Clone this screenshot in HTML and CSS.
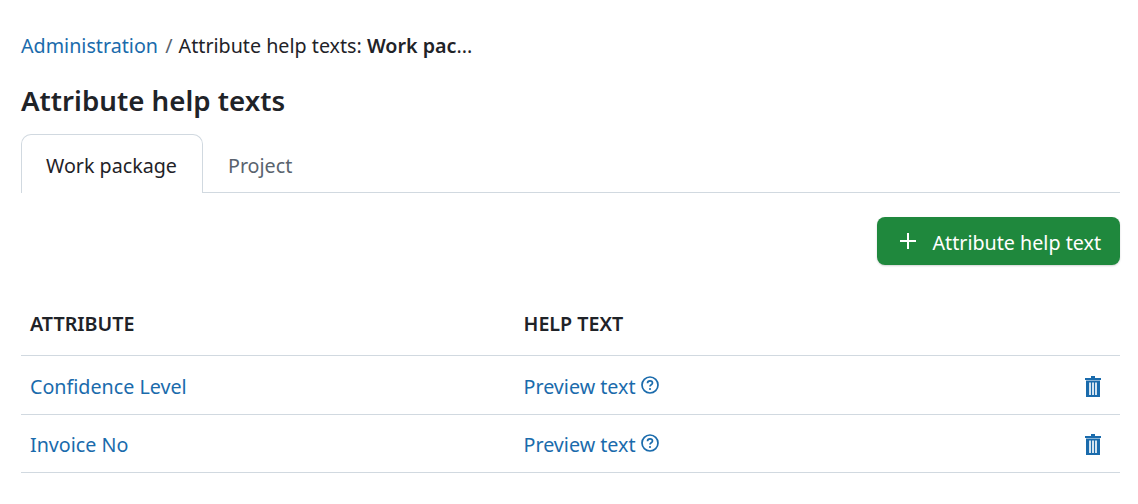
FILE: index.html
```html
<!DOCTYPE html>
<html>
<head>
    <meta charset="UTF-8" />
    <title>Attribute help texts</title>
    <link rel="stylesheet" href="styles.css">
</head>
<body>
    <div class="breadcrumb">
        <a href="#">Administration</a>
        <span class="separator">/</span>
        <span>Attribute help texts: <b>Work pac</b>...</span>
    </div>

    <h1 class="title">Attribute help texts</h1>

    <div class="tabs">
        <a class="tab active" href="#">Work package</a>
        <a class="tab" href="#">Project</a>
    </div>

    <div class="toolbar">
        <a class="button" href="#">
            <svg class="plus" width="18" height="18" viewBox="0 0 18 18"><path d="M9 1v16M1 9h16" stroke="#fff" stroke-width="2" fill="none"/></svg>
            <span class="label">Attribute help text</span>
        </a>
    </div>

    <table class="list">
        <thead>
            <tr>
                <th class="col-attr">ATTRIBUTE</th>
                <th>HELP TEXT</th>
                <th class="col-actions"></th>
            </tr>
        </thead>
        <tbody>
            <tr>
                <td><a href="#">Confidence Level</a></td>
                <td>
                    <a class="preview" href="#">Preview text
                        <svg width="18" height="18" viewBox="0 0 18 18"><circle cx="9" cy="9" r="8" stroke="#1a6bac" stroke-width="1.7" fill="none"/><path d="M6.500 7.200c0-1.500 1.100-2.400 2.500-2.400s2.500.9 2.500 2.100c0 1.800-2.500 1.800-2.500 3.500" stroke="#1a6bac" stroke-width="1.700" fill="none"/><circle cx="9" cy="13" r="1.100" fill="#1a6bac"/></svg>
                    </a>
                </td>
                <td class="col-actions">
                    <svg class="trash" width="16" height="21" viewBox="0 0 16 21"><path d="M6 0h4v2H6zM0 2h16v2H0zM1 4.500h14V21H1z" fill="#1a6bac"/><path d="M4 6.500h2V19H4zM7 6.500h2V19H7zM10 6.500h2V19h-2z" fill="#d3e3f0"/></svg>
                </td>
            </tr>
            <tr>
                <td><a href="#">Invoice No</a></td>
                <td>
                    <a class="preview" href="#">Preview text
                        <svg width="18" height="18" viewBox="0 0 18 18"><circle cx="9" cy="9" r="8" stroke="#1a6bac" stroke-width="1.7" fill="none"/><path d="M6.500 7.200c0-1.500 1.100-2.400 2.500-2.400s2.500.9 2.500 2.100c0 1.800-2.500 1.800-2.500 3.500" stroke="#1a6bac" stroke-width="1.700" fill="none"/><circle cx="9" cy="13" r="1.100" fill="#1a6bac"/></svg>
                    </a>
                </td>
                <td class="col-actions">
                    <svg class="trash" width="16" height="21" viewBox="0 0 16 21"><path d="M6 0h4v2H6zM0 2h16v2H0zM1 4.500h14V21H1z" fill="#1a6bac"/><path d="M4 6.500h2V19H4zM7 6.500h2V19H7zM10 6.500h2V19h-2z" fill="#d3e3f0"/></svg>
                </td>
            </tr>
        </tbody>
    </table>
</body>
</html>
```

FILE: styles.css
```css
html, body {
    overflow: hidden;
}

body {
    margin: 0;
    padding: 32px 18px 0 21px;
    background-color: white;
    color: #1f2328;
    font-family: "Noto Sans", Arial, sans-serif;
    font-size: 19.7px;
}

a {
    color: #1a6bac;
    text-decoration: none;
}

.breadcrumb {
    height: 28px;
    line-height: 28px;
}

.separator {
    color: #59636e;
    margin: 0 1px 0 2px;
}

.breadcrumb b {
    font-weight: 600;
}

.title {
    margin: 21px 0 0 0;
    height: 53px;
    line-height: 38px;
    font-size: 27.7px;
    font-weight: 600;
}

.tabs {
    display: flex;
    height: 59px;
    box-sizing: border-box;
    border-bottom: 1px solid #d1d9e0;
}

.tab {
    padding: 0 25px;
    line-height: 63px;
    color: #59636e;
}

.tab.active {
    height: 59px;
    box-sizing: border-box;
    padding: 0 25px 0 24px;
    line-height: 61px;
    color: #1f2328;
    background-color: white;
    border: 1px solid #d1d9e0;
    border-bottom: none;
    border-radius: 10px 10px 0 0;
}

.toolbar {
    display: flex;
    justify-content: flex-end;
    margin-top: 24px;
}

.button {
    display: flex;
    align-items: center;
    gap: 15px;
    height: 48px;
    box-sizing: border-box;
    padding: 0 19px 0 22px;
    color: white;
    background-color: #1f883d;
    border-radius: 8px;
    box-shadow: 0 1px 2px rgba(31, 35, 40, 0.2);
}

.label {
    padding-top: 2px;
}

.list {
    width: 100%;
    margin-top: 32px;
    border-collapse: collapse;
}

.list th {
    height: 58px;
    padding: 0 9px 4px 9px;
    box-sizing: border-box;
    text-align: left;
    font-weight: 600;
    border-bottom: 1px solid #d1d9e0;
}

.list td {
    height: 58px;
    padding: 3px 9px 0 9px;
    box-sizing: border-box;
    border-bottom: 1px solid #d1d9e0;
}

.list tbody tr:first-child td {
    height: 59px;
    padding-top: 4px;
}

.col-attr {
    width: 493.500px;
}

.col-actions {
    width: 60px;
    text-align: right;
}

.list td.col-actions {
    padding-right: 19px;
}

.list td svg {
    vertical-align: middle;
}

.preview svg {
    margin-bottom: 6px;
}

.list td svg.trash {
    margin-bottom: 4px;
}
```
